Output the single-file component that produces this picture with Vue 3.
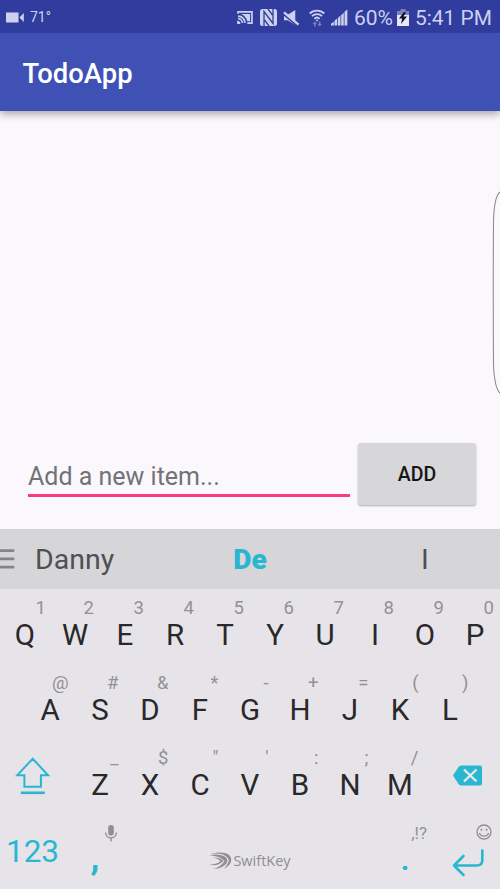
<script setup>
const topRow = [
  ['Q', '1'], ['W', '2'], ['E', '3'], ['R', '4'], ['T', '5'],
  ['Y', '6'], ['U', '7'], ['I', '8'], ['O', '9'], ['P', '0'],
]
const homeRow = [
  ['A', '@'], ['S', '#'], ['D', '&'], ['F', '*'], ['G', '-'],
  ['H', '+'], ['J', '='], ['K', '('], ['L', ')'],
]
const bottomRow = [
  ['Z', '_'], ['X', '$'], ['C', '"'], ['V', "'"], ['B', ':'], ['N', ';'], ['M', '/'],
]
</script>

<template>
  <div class="screen">
    <header class="status">
      <svg class="cam" width="18" height="11" viewBox="0 0 18 11"><path d="M0 .5h12.500v10H0zM17.800 1v9L13.500 5.500z" fill="currentColor" /></svg>
      <span class="temp">71°</span>
      <span class="spacer"></span>
      <svg class="cast" width="16" height="13" viewBox="0 0 17 14" fill="none" stroke="currentColor" stroke-width="1.800">
        <path d="M1 3V1h15v12h-5M1 5.500A7.500 7.500 0 0 1 8.500 13M1 8.300A4.700 4.700 0 0 1 5.700 13" />
        <path d="M4 3.200h10v7.800h-3C10 7 7.500 4.500 4 3.200z" fill="currentColor" stroke="none" />
        <path d="M0 10.500A3.500 3.500 0 0 1 3.500 14H0z" fill="currentColor" stroke="none" />
      </svg>
      <svg class="nfc" width="17" height="17" viewBox="0 0 17 17">
        <rect width="17" height="17" rx="2.500" fill="currentColor" />
        <path d="M4 17V2.500L13 14.500V0M8 0l4.500 6M9 17L4.500 11" fill="none" stroke="#303c9e" stroke-width="1.300" />
      </svg>
      <svg class="mute" width="17" height="16" viewBox="0 0 18 17">
        <path d="M1 5h4l8-5v16l-8-5H1z" fill="currentColor" />
        <path d="M0 4L15 16.500" stroke="#303c9e" stroke-width="2" />
        <path d="M1 2.500L16.500 15.500" stroke="currentColor" stroke-width="2.600" />
      </svg>
      <svg class="wifi" width="16" height="18" viewBox="0 0 16 18" fill="none" stroke="currentColor" stroke-width="1.800">
        <path d="M.7 4.500a10.500 10.500 0 0 1 14.600 0M3 7.200a7.200 7.200 0 0 1 10 0M5.300 9.800a4 4 0 0 1 5.400 0" />
        <circle cx="8" cy="11.500" r=".9" fill="currentColor" stroke="none" />
        <path d="M3.500 15L5.800 12.500l2.200 2.500zM5 15h1.600v2.500H5zM8.500 15h4.400l-2.200 2.500zM9.900 12.500h1.600V15H9.900z" fill="currentColor" stroke="none" opacity=".45" />
      </svg>
      <svg class="signal" width="17" height="17" viewBox="0 0 18 17" fill="currentColor">
        <path d="M0 15l3-2v4H0zM3.700 12l2.800-2.500v7.500H3.700zM7.300 9L10 6.500V17H7.300zM10.800 6l2.700-2.500V17h-2.700zM14.300 2.500L17.300 0v17h-3z" />
      </svg>
      <span class="percent">60%</span>
      <svg class="battery" width="12" height="17" viewBox="0 0 12 17">
        <path d="M3.500 0h5v2H12v5H0V2h3.500z" fill="#7a82c6" />
        <path d="M0 6h12v11H0z" fill="#e6e8fa" />
        <path d="M7 3L2 9.500h3.200L4 15l6-7.500H6.500L9 3z" fill="#11121a" />
      </svg>
      <span class="clock">5:41 PM</span>
    </header>

    <div class="appbar"><h1>TodoApp</h1></div>

    <main class="content">
      <svg class="edge" width="8" height="204" viewBox="0 0 8 204" fill="none"><path d="M8 1C4 4 2 12 1.500 30Q1 100 1.500 174Q2.500 197 8 202" stroke="#8e8d90" stroke-width="1.100" /></svg>
      <div class="form">
        <div class="field">Add a new item...</div>
        <button class="add">ADD</button>
      </div>
    </main>

    <div class="suggestions">
      <svg class="menu" width="15" height="20" viewBox="0 0 15 20"><path d="M0 1.700h14.300M0 9.900h14.300M0 18.200h14.300" stroke="#858487" stroke-width="2.800" /></svg>
      <span class="left">Danny</span>
      <span class="mid">De</span>
      <span class="right">I</span>
    </div>

    <section class="keyboard">
      <div class="row top">
        <div v-for="[k, h] in topRow" :key="k" class="key"><span class="hint">{{ h }}</span><span class="letter">{{ k }}</span></div>
      </div>
      <div class="row home">
        <div v-for="[k, h] in homeRow" :key="k" class="key"><span class="hint">{{ h }}</span><span class="letter">{{ k }}</span></div>
      </div>
      <div class="row">
        <div class="side shift">
          <svg width="36" height="40" viewBox="0 0 36 40" fill="none" stroke="#29b6d0" stroke-width="2"><path d="M17.700 2.700L2.200 19.300h7.200v11.400h16.500V19.300h7.200z" /><path d="M5.800 36.800h24" stroke-width="2.600" /></svg>
        </div>
        <div v-for="[k, h] in bottomRow" :key="k" class="key"><span class="hint">{{ h }}</span><span class="letter">{{ k }}</span></div>
        <div class="side back">
          <svg width="30" height="22" viewBox="0 0 30 22"><path d="M0 10.500L5.500 2Q6.700 .5 8.500 .5H27q2 0 2 2v16q0 2-2 2H8.500q-1.800 0-3-1.500z" fill="#29b6d0" /><path d="M11 4.500l12.500 12M23.500 4.500L11 16.500" stroke="#e9e8eb" stroke-width="2.400" /></svg>
        </div>
      </div>
      <div class="row">
        <div class="numeric">123</div>
        <div class="key punct">
          <span class="hint mic"><svg width="12" height="17" viewBox="0 0 12 17"><rect x="3.200" y="0" width="5.600" height="10.500" rx="2.800" fill="#8f8e91" /><path d="M.7 7.500c0 7.200 10.600 7.200 10.600 0M6 13v3.500" fill="none" stroke="#8f8e91" stroke-width="1.400" /></svg></span>
          <span class="letter comma">,</span>
        </div>
        <div class="space">
          <svg width="24" height="18" viewBox="0 0 24 18" fill="#8f8e91">
            <path d="M1.500 2C8 0 17 -.5 21 4Q23.500 8 21 12Q18 15.500 14.500 17Q19.500 12 19.800 8.500Q19 4.500 14 2.500Q8 1 1.500 2z" />
            <path d="M.5 3.200C7 1.800 13 2.500 16.500 5Q19.500 8 17.800 11Q14 16.500 4 17Q12 14.800 15.500 9Q11 4 .5 3.200z" />
            <path d="M3.500 5.500C9 5.300 12.500 6.500 14.500 9C10.500 12.800 6 14 .5 12.800C6 12.500 9.500 11 11.500 9C9.500 7.200 7 6.200 3.500 5.500z" />
          </svg>
          <span>SwiftKey</span>
        </div>
        <div class="key punct"><span class="hint small">,!?</span><span class="letter dot">.</span></div>
        <div class="enter">
          <svg class="smile" width="16" height="16" viewBox="0 0 16 16" fill="none" stroke="#8f8e91" stroke-width="1.300"><circle cx="8" cy="8" r="7" /><path d="M3.500 8.800c1 4.300 8 4.300 9 0" /><circle cx="5.400" cy="5.700" r="1" fill="#8f8e91" stroke="none" /><circle cx="10.600" cy="5.700" r="1" fill="#8f8e91" stroke="none" /></svg>
          <svg class="return" width="32" height="28" viewBox="0 0 32 28" fill="none" stroke="#29b6d0" stroke-width="2.600" stroke-linecap="round" stroke-linejoin="round"><path d="M30.300 1.500v9.500q0 5.500-5.500 5.500H2M11.500 7L2 16.500l9.500 9.500" /></svg>
        </div>
      </div>
    </section>
  </div>
</template>

<style>
body { margin: 0; overflow: hidden; }
</style>

<style scoped>
.screen { width: 500px; height: 889px; display: flex; flex-direction: column; overflow: hidden; background: #faf8fc; font-family: Roboto, sans-serif; }
.screen svg { display: block; flex: none; }
.status { height: 33px; flex: none; display: flex; align-items: center; box-sizing: border-box; padding: 2px 8px 0 6px; background: #303c9e; color: #cdd1ee; white-space: nowrap; z-index: 2; }
.cam { margin-bottom: 1px; }
.temp { font-size: 14px; margin-left: 6px; line-height: 30px; padding-bottom: 2px; }
.spacer { flex: 1; }
.cast { margin-left: 1px; }
.nfc { margin-left: 7px; }
.mute { margin-left: 6px; }
.wifi { margin-left: 9px; }
.signal { margin-left: 6px; }
.percent { font-size: 21px; margin-left: 6px; width: 38px; line-height: 32px; }
.battery { margin-left: 5px; }
.clock { font-size: 20.9px; margin-left: 6px; width: 77px; line-height: 32px; }
.appbar { height: 78px; flex: none; display: flex; align-items: center; padding-left: 22.5px; background: #3f51b5; box-shadow: 0 2px 9px rgba(0, 0, 0, .42); z-index: 1; }
h1 { margin: 4px 0 0; font-size: 27.4px; font-weight: 500; color: #fff; line-height: 32px; }
.content { height: 418px; flex: none; position: relative; display: flex; align-items: flex-end; }
.edge { position: absolute; right: 0; top: 80px; }
.form { display: flex; align-items: flex-start; width: 100%; padding: 0 24px 24px 28px; }
.field { width: 322px; height: 54px; box-sizing: border-box; padding-top: 17px; font-size: 25px; line-height: 34px; color: #737275; border-bottom: 3px solid #fb3a7d; }
.add { width: 118px; height: 62px; margin-left: 8px; padding: 0; border: 0; border-radius: 3px; background: #d7d6d9; box-shadow: 0 1px 2px rgba(0, 0, 0, .3); color: #151517; font: 500 19.500px/62px Roboto, sans-serif; padding-top: 1px; }
.suggestions { height: 60px; flex: none; display: flex; align-items: center; background: #d6d5d8; font-size: 28.500px; color: #504f52; line-height: 60px; }
.suggestions span { flex: none; padding-top: 2px; }
.left { width: 160px; margin-left: 20px; }
.suggestions .mid { width: 110px; text-align: center; color: #29b6d0; font-weight: 900; font-size: 28px; }
.right { width: 150px; margin-left: 45px; text-align: center; }
.keyboard { height: 300px; flex: none; background: #e6e4e8; }
.row { height: 75px; display: flex; }
.home { padding: 0 25px; }
.key { width: 50px; box-sizing: border-box; padding-top: 9px; display: flex; flex-direction: column; }
.hint { height: 21px; line-height: 21px; font-size: 18.5px; color: #929194; padding-right: 6.5px; display: flex; justify-content: flex-end; }
.top .hint { padding-right: 6px; }
.top .key:first-child .hint { padding-right: 4px; }
.letter { height: 32px; line-height: 32px; font-size: 29.5px; text-align: center; color: #29282a; }
.side { width: 75px; display: flex; }
.shift { padding: 17px 0 0 15px; box-sizing: border-box; }
.back { padding: 26px 0 0 28px; box-sizing: border-box; }
.numeric { width: 65px; text-align: center; font-size: 31.5px; line-height: 76px; color: #29b6d0; }
.punct { width: 60px; }
.punct .hint { padding-right: 8px; }
.punct .mic { padding-top: 2px; height: 19px; }
.punct .letter { color: #29b6d0; font-weight: 700; }
.punct .comma { font-size: 36px; line-height: 26px; }
.small { font-size: 17px; }
.space { width: 250px; display: flex; align-items: center; justify-content: center; gap: 0; padding-top: 19px; box-sizing: border-box; height: 75px; font: 14.500px "Open Sans", sans-serif; color: #8f8e91; }
.space span { margin-top: -1px; }
.enter { width: 65px; display: flex; flex-direction: column; align-items: flex-end; padding-top: 10px; box-sizing: border-box; }
.smile { margin-right: 8px; }
.return { margin: 9px 16px 0 0; }
</style>
